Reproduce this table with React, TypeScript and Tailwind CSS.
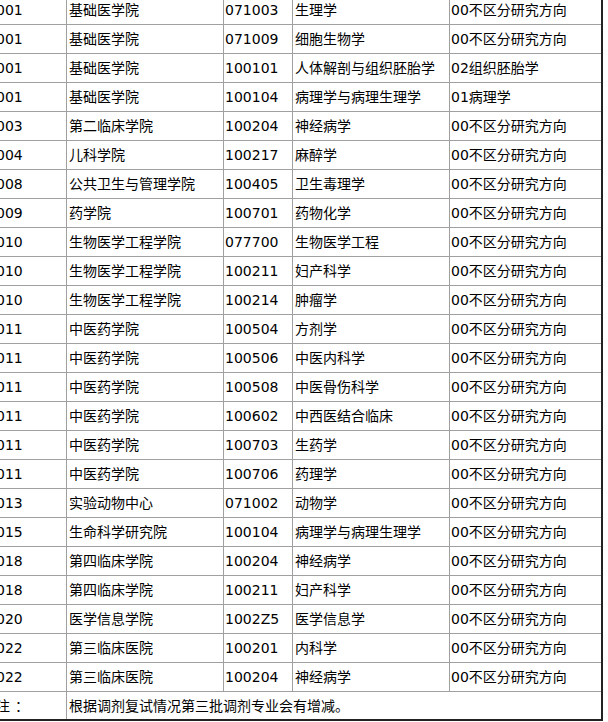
import React from "react";

const rows: [string, string, string, string, string][] = [
  ["001", "基础医学院", "071003", "生理学", "00不区分研究方向"],
  ["001", "基础医学院", "071009", "细胞生物学", "00不区分研究方向"],
  ["001", "基础医学院", "100101", "人体解剖与组织胚胎学", "02组织胚胎学"],
  ["001", "基础医学院", "100104", "病理学与病理生理学", "01病理学"],
  ["003", "第二临床学院", "100204", "神经病学", "00不区分研究方向"],
  ["004", "儿科学院", "100217", "麻醉学", "00不区分研究方向"],
  ["008", "公共卫生与管理学院", "100405", "卫生毒理学", "00不区分研究方向"],
  ["009", "药学院", "100701", "药物化学", "00不区分研究方向"],
  ["010", "生物医学工程学院", "077700", "生物医学工程", "00不区分研究方向"],
  ["010", "生物医学工程学院", "100211", "妇产科学", "00不区分研究方向"],
  ["010", "生物医学工程学院", "100214", "肿瘤学", "00不区分研究方向"],
  ["011", "中医药学院", "100504", "方剂学", "00不区分研究方向"],
  ["011", "中医药学院", "100506", "中医内科学", "00不区分研究方向"],
  ["011", "中医药学院", "100508", "中医骨伤科学", "00不区分研究方向"],
  ["011", "中医药学院", "100602", "中西医结合临床", "00不区分研究方向"],
  ["011", "中医药学院", "100703", "生药学", "00不区分研究方向"],
  ["011", "中医药学院", "100706", "药理学", "00不区分研究方向"],
  ["013", "实验动物中心", "071002", "动物学", "00不区分研究方向"],
  ["015", "生命科学研究院", "100104", "病理学与病理生理学", "00不区分研究方向"],
  ["018", "第四临床学院", "100204", "神经病学", "00不区分研究方向"],
  ["018", "第四临床学院", "100211", "妇产科学", "00不区分研究方向"],
  ["020", "医学信息学院", "1002Z5", "医学信息学", "00不区分研究方向"],
  ["022", "第三临床医院", "100201", "内科学", "00不区分研究方向"],
  ["022", "第三临床医院", "100204", "神经病学", "00不区分研究方向"],
];

const font = {
  fontFamily: '"DejaVu Sans", "Noto Sans CJK SC", sans-serif',
};

export default function App() {
  return (
    <div className="w-[608px] h-[722px] overflow-hidden bg-white">
      <div
        className="ml-[-5px] mt-[-4px] w-[608px] border-r-2 border-b-2 border-[#222] text-[14px] text-black leading-[28px]"
        style={font}
      >
        {rows.map((r, i) => (
          <div key={i} className="flex h-[29px] border-b border-[#a0a0a0]">
            <div className="w-[72px] shrink-0 border-r border-[#a0a0a0] pl-[1px] whitespace-nowrap">{r[0]}</div>
            <div className="w-[157px] shrink-0 border-r border-[#a0a0a0] pl-[2px] whitespace-nowrap">{r[1]}</div>
            <div className="w-[69px] shrink-0 border-r border-[#a0a0a0] pl-[1px] whitespace-nowrap">{r[2]}</div>
            <div className="w-[157px] shrink-0 border-r border-[#a0a0a0] pl-[2px] whitespace-nowrap">{r[3]}</div>
            <div className="flex-1 pl-[1px] whitespace-nowrap">{r[4]}</div>
          </div>
        ))}
        <div className="flex h-[27px]">
          <div className="w-[72px] shrink-0 border-r border-[#a0a0a0] pl-[1px] whitespace-nowrap">
            <span className="mr-[5px]">注</span>：
          </div>
          <div className="flex-1 pl-[2px] whitespace-nowrap">根据调剂复试情况第三批调剂专业会有增减。</div>
        </div>
      </div>
    </div>
  );
}
